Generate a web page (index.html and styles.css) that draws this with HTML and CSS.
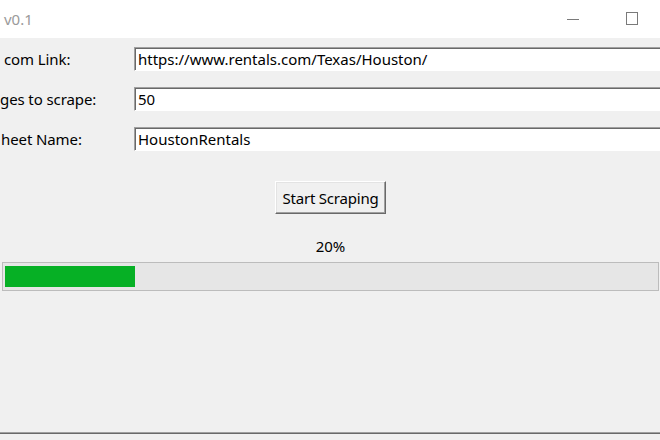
FILE: index.html
```html
<!DOCTYPE html>
<html>
<head>
<meta charset="utf-8">
<link rel="stylesheet" href="styles.css">
</head>
<body>
<div class="window">
  <div class="titlebar">
    <span class="title">v0.1</span>
    <div class="controls">
      <span class="ctl min"><span class="min-line"></span></span>
      <span class="ctl max"><span class="max-box"></span></span>
    </div>
  </div>
  <div class="form">
    <label class="lbl lbl1">com Link:</label>
    <div class="entry">https://www.rentals.com/Texas/Houston/</div>
    <label class="lbl lbl2">ges to scrape:</label>
    <div class="entry">50</div>
    <label class="lbl lbl3">heet Name:</label>
    <div class="entry">HoustonRentals</div>
  </div>
  <div class="actions">
    <button class="btn">Start Scraping</button>
  </div>
  <div class="status">20%</div>
  <div class="progress"><div class="bar" style="width:130px"></div></div>
  <div class="spacer"></div>
  <div class="bottom-edge"></div>
</div>
</body>
</html>
```
FILE: styles.css
```css
html, body {
  margin: 0;
  padding: 0;
}
body {
  width: 660px;
  height: 440px;
  overflow: hidden;
  background: #f0f0f0;
  font-family: "Noto Sans", "Open Sans", sans-serif;
  font-size: 15px;
  color: #000;
}
.window {
  display: flex;
  flex-direction: column;
  height: 440px;
  overflow: hidden;
}
.titlebar {
  height: 38px;
  background: #fff;
  display: flex;
  align-items: center;
  justify-content: space-between;
  flex-shrink: 0;
}
.title {
  padding-left: 4px;
  color: #9a9a9a;
  font-size: 15px;
}
.controls {
  display: flex;
  align-items: center;
  padding-right: 22px;
}
.ctl {
  display: flex;
  align-items: center;
  justify-content: center;
}
.min {
  width: 14px;
  margin-right: 46px;
}
.min-line {
  display: block;
  width: 12px;
  height: 1px;
  background: #7a7a7a;
}
.max-box {
  display: block;
  width: 10px;
  height: 11px;
  border: 1px solid #7a7a7a;
  margin-bottom: 1px;
}
.form {
  display: grid;
  grid-template-columns: 134px 526px;
  row-gap: 16px;
  padding-top: 9px;
  width: 660px;
  overflow: hidden;
}
.lbl {
  display: flex;
  align-items: center;
  height: 24px;
  white-space: nowrap;
  letter-spacing: -0.1px;
}
.lbl1 { padding-left: 4px; }
.lbl2 { padding-left: 0; }
.lbl3 { padding-left: 1px; }
.entry {
  box-sizing: border-box;
  height: 24px;
  background: #fff;
  border-top: 1px solid #a0a0a0;
  border-left: 1px solid #a0a0a0;
  border-bottom: 1px solid #fff;
  box-shadow: inset 1px 1px 0 #696969;
  padding-left: 3px;
  display: flex;
  align-items: center;
  white-space: nowrap;
  overflow: hidden;
}
.actions {
  display: flex;
  justify-content: center;
  padding-top: 30px;
  padding-left: 1px;
}
.btn {
  box-sizing: border-box;
  width: 111px;
  height: 33px;
  font-family: inherit;
  font-size: 15px;
  letter-spacing: -0.2px;
  color: #000;
  background: #f0f0f0;
  border-top: 1px solid #fff;
  border-left: 1px solid #fff;
  border-right: 1px solid #696969;
  border-bottom: 1px solid #696969;
  box-shadow: inset -1px -1px 0 #a0a0a0, inset 1px 1px 0 #e3e3e3;
  padding: 0;
  display: flex;
  align-items: center;
  justify-content: center;
}
.status {
  margin-top: 22px;
  height: 20px;
  line-height: 20px;
  text-align: center;
  padding-left: 1px;
}
.progress {
  box-sizing: border-box;
  margin: 6px 0 0 2px;
  width: 657px;
  height: 29px;
  border: 1px solid #bcbcbc;
  background: #e6e6e6;
  padding: 3px 2px;
  display: flex;
}
.bar {
  height: 100%;
  background: #06b025;
}
.spacer {
  flex: 1;
}
.bottom-edge {
  height: 2px;
  border-top: 1px solid #a0a0a0;
  background: #696969;
  box-sizing: border-box;
  margin-bottom: 6px;
  flex-shrink: 0;
}
```
